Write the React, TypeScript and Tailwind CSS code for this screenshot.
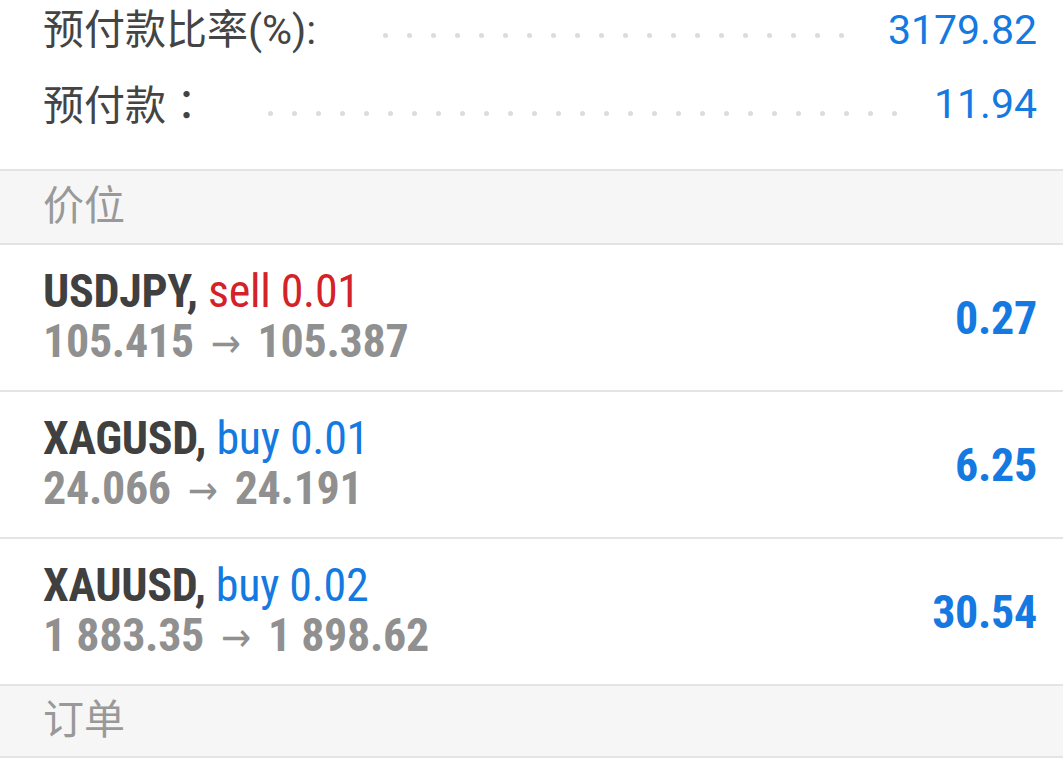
import React from 'react';

const cond = { fontFamily: '"Roboto Condensed", "Liberation Sans Narrow", "DejaVu Sans Condensed", Roboto, sans-serif' };

interface Position {
    symbol: string;
    side: 'buy' | 'sell';
    volume: string;
    open: string;
    current: string;
    profit: string;
}

const POSITIONS: Position[] = [
    { symbol: 'USDJPY', side: 'sell', volume: '0.01', open: '105.415', current: '105.387', profit: '0.27' },
    { symbol: 'XAGUSD', side: 'buy', volume: '0.01', open: '24.066', current: '24.191', profit: '6.25' },
    { symbol: 'XAUUSD', side: 'buy', volume: '0.02', open: '1 883.35', current: '1 898.62', profit: '30.54' },
];

const Dots = ({ count, gap }: { count: number; gap: string }) => (
    <div className={`flex items-center gap-[19px] ${gap}`}>
        {Array.from({ length: count }).map((_, i) => (
            <span key={i} className="block w-[5px] h-[5px] rounded-full bg-[#dcdcdc]" />
        ))}
    </div>
);

const SectionHeader = ({ title, h }: { title: string; h: string }) => (
    <div className={`${h} flex items-center pl-[43px] bg-[#f6f6f6] border-b-2 border-[#e4e4e4] text-[41px] text-[#999999]`}>
        {title}
    </div>
);

export default function App() {
    return (
        <div
            className="w-[1063px] h-[760px] bg-white overflow-hidden"
            style={{ fontFamily: 'Roboto, "Noto Sans CJK SC", sans-serif' }}
        >
            {/* Account summary */}
            <div className="h-[171px] border-b-2 border-[#e4e4e4] pl-[43px] pr-[26px] text-[41px] text-[#444444]">
                <div className="h-[62px] flex items-center">
                    <span>预付款比率(%):</span>
                    <div className="flex-1" />
                    <Dots count={20} gap="mr-[44px] mt-[8px]" />
                    <span className="text-[#1479e0]">3179.82</span>
                </div>
                <div className="h-[86px] flex items-center">
                    <span>
                        预付款<span style={{ fontFamily: '"Noto Sans CJK TC", sans-serif' }}>：</span>
                    </span>
                    <div className="flex-1" />
                    <Dots count={27} gap="mr-[37px] mt-[16px]" />
                    <span className="text-[#1479e0]">11.94</span>
                </div>
            </div>

            <SectionHeader title="价位" h="h-[74px]" />

            {POSITIONS.map(p => (
                <div
                    key={p.symbol}
                    className="h-[147px] flex items-center pl-[43px] pr-[26px] border-b-2 border-[#e4e4e4]"
                    style={cond}
                >
                    <div className="flex-1 text-[46px] leading-[50px] tracking-[-0.3px]">
                        <div>
                            <span className="font-bold text-[#404040]">{p.symbol},</span>{' '}
                            <span className={p.side === 'sell' ? 'text-[#d3222a]' : 'text-[#1479e0]'}>
                                {p.side} {p.volume}
                            </span>
                        </div>
                        <div className="font-bold text-[#909090]">
                            {p.open}
                            <span className="inline-block mx-[17px] font-normal text-[40px]">→</span>
                            {p.current}
                        </div>
                    </div>
                    <div className="text-[46px] leading-[50px] tracking-[-0.3px] font-bold text-[#1479e0]">{p.profit}</div>
                </div>
            ))}

            <SectionHeader title="订单" h="h-[72px]" />
        </div>
    );
}
